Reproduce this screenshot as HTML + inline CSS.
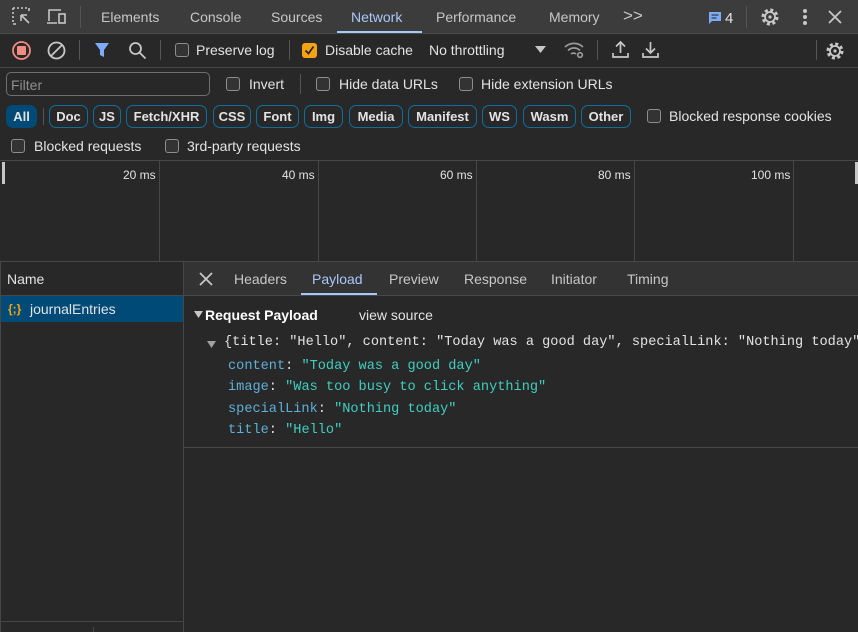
<!DOCTYPE html>
<html><head><style>
*{box-sizing:border-box;margin:0;padding:0}
body{width:858px;height:632px;background:#282828;font-family:"Liberation Sans",sans-serif;font-size:14px;color:#e3e3e3;position:relative;overflow:hidden}
.a{position:absolute;white-space:nowrap}
.hl{position:absolute;height:1px;background:#474747}
.vl{position:absolute;width:1px;background:#474747}
.cb{position:absolute;width:14px;height:14px;border:1.5px solid #8e8e8e;border-radius:3px;background:#333}
.chip{position:absolute;top:105px;height:23px;border:1px solid #0e6e9e;border-radius:7px;font-weight:bold;font-size:13px;color:#e3e3e3;padding-top:3px;text-align:center}
.mono{font-family:"Liberation Mono",monospace;font-size:13.6px}
.k{color:#5db0d7}.s{color:#3fcfc0}
</style></head><body>
<div class="a" style="left:0;top:0;width:858px;height:33px;background:#3c3c3c"></div>
<div class="hl" style="left:0;top:33px;width:858px;background:#4a4a4a"></div>
<svg class="a" style="left:12px;top:7px" width="22" height="20" viewBox="0 0 22 20" fill="none" stroke="#c7c7c7" stroke-width="1.6"><path d="M1 1h2M5 1h2M9 1h2M13 1h2M1 1v2M1 5v2M1 9v2M1 13v2M1 17h3M17 1v3" /><path d="M9 8l8 8M9 8h6M9 8v6"/></svg>
<svg class="a" style="left:46px;top:8px" width="22" height="18" viewBox="0 0 22 18" fill="none" stroke="#c7c7c7" stroke-width="1.6"><path d="M3 13V2h12M1 15h10"/><rect x="13" y="6" width="6" height="9"/></svg>
<div class="vl" style="left:80px;top:6px;height:22px;background:#555"></div>
<div class="a" style="left:101px;top:9px;color:#c7c7c7">Elements</div>
<div class="a" style="left:190px;top:9px;color:#c7c7c7">Console</div>
<div class="a" style="left:271px;top:9px;color:#c7c7c7">Sources</div>
<div class="a" style="left:351px;top:9px;color:#a8c7fa">Network</div>
<div class="a" style="left:337px;top:31px;width:85px;height:2px;background:#a8c7fa"></div>
<div class="a" style="left:436px;top:9px;color:#c7c7c7">Performance</div>
<div class="a" style="left:549px;top:9px;color:#c7c7c7">Memory</div>
<div class="a" style="left:623px;top:6px;color:#c7c7c7;font-size:17px">&gt;&gt;</div>
<svg class="a" style="left:708px;top:11px" width="14" height="13" viewBox="0 0 14 13"><path d="M1 1h12v9H4l-3 3z" fill="#7cacf8"/><path d="M3.5 4h7M3.5 7h5" stroke="#3c3c3c" stroke-width="1.3"/></svg>
<div class="a" style="left:725px;top:10px;color:#e3e3e3;font-size:15px">4</div>
<div class="vl" style="left:746px;top:6px;height:22px;background:#555"></div>
<svg class="a" style="left:760px;top:7px" width="20" height="20" viewBox="0 0 20 20"><circle cx="10" cy="10" r="7" fill="none" stroke="#c7c7c7" stroke-width="3" stroke-dasharray="3 2.5"/><circle cx="10" cy="10" r="5" fill="none" stroke="#c7c7c7" stroke-width="1.8"/><circle cx="10" cy="10" r="1.6" fill="#c7c7c7"/></svg>
<div class="a" style="left:803px;top:9px;width:4px;height:4px;border-radius:2px;background:#c7c7c7;box-shadow:0 6px #c7c7c7,0 12px #c7c7c7"></div>
<svg class="a" style="left:828px;top:10px" width="14" height="14"><path d="M1 1l12 12M13 1L1 13" stroke="#c7c7c7" stroke-width="1.8"/></svg>

<svg class="a" style="left:11px;top:40px" width="21" height="21"><circle cx="10.5" cy="10.5" r="8.5" fill="none" stroke="#f28b82" stroke-width="1.8"/><rect x="6" y="6" width="9" height="9" rx="1" fill="#f28b82"/></svg>
<svg class="a" style="left:46px;top:40px" width="21" height="21"><circle cx="10.5" cy="10.5" r="8" fill="none" stroke="#c7c7c7" stroke-width="1.8"/><path d="M5 16L16 5" stroke="#c7c7c7" stroke-width="1.8"/></svg>
<div class="vl" style="left:79px;top:40px;height:20px;background:#555"></div>
<svg class="a" style="left:94px;top:42px" width="16" height="16"><path d="M1 1h14l-5 7v7l-4-2V8z" fill="#7cacf8"/></svg>
<svg class="a" style="left:128px;top:41px" width="19" height="19" fill="none" stroke="#c7c7c7" stroke-width="1.8"><circle cx="7.5" cy="7.5" r="5.5"/><path d="M11.5 11.5l6 6"/></svg>
<div class="vl" style="left:160px;top:40px;height:20px;background:#555"></div>
<div class="cb" style="left:175px;top:43px"></div>
<div class="a" style="left:196px;top:42px">Preserve log</div>
<div class="vl" style="left:289px;top:40px;height:20px;background:#555"></div>
<div class="a" style="left:302px;top:43px;width:15px;height:15px;background:#f6a313;border-radius:3px"></div>
<svg class="a" style="left:304px;top:45px" width="11" height="11"><path d="M1.5 5.5l3 3 5-7" fill="none" stroke="#282828" stroke-width="1.8"/></svg>
<div class="a" style="left:325px;top:42px">Disable cache</div>
<div class="a" style="left:429px;top:42px">No throttling</div>
<svg class="a" style="left:535px;top:46px" width="11" height="7"><path d="M0 0h11L5.5 7z" fill="#c7c7c7"/></svg>
<svg class="a" style="left:564px;top:40px" width="21" height="19" fill="none" stroke="#9a9a9a" stroke-width="1.7"><path d="M1 7a13 13 0 0 1 18 0M4 10.5a8.5 8.5 0 0 1 12 0M7 14a4 4 0 0 1 5 0"/><circle cx="16" cy="15" r="2.3"/></svg>
<div class="vl" style="left:597px;top:40px;height:20px;background:#555"></div>
<svg class="a" style="left:612px;top:40px" width="17" height="19" fill="none" stroke="#c7c7c7" stroke-width="1.7"><path d="M8.5 13V2M4 6.5l4.5-4.5 4.5 4.5M1 13v4h15v-4"/></svg>
<svg class="a" style="left:642px;top:40px" width="17" height="19" fill="none" stroke="#c7c7c7" stroke-width="1.7"><path d="M8.5 2v11M4 8.5l4.5 4.5 4.5-4.5M1 13v4h15v-4"/></svg>
<div class="vl" style="left:816px;top:40px;height:20px;background:#555"></div>
<svg class="a" style="left:825px;top:41px" width="20" height="20" viewBox="0 0 20 20"><circle cx="10" cy="10" r="7" fill="none" stroke="#c7c7c7" stroke-width="3" stroke-dasharray="3 2.5"/><circle cx="10" cy="10" r="5" fill="none" stroke="#c7c7c7" stroke-width="1.8"/><circle cx="10" cy="10" r="1.6" fill="#c7c7c7"/></svg>
<div class="hl" style="left:0;top:67px;width:858px"></div>

<div class="a" style="left:6px;top:72px;width:204px;height:24px;border:1px solid #6f6f6f;border-radius:5px"></div>
<div class="a" style="left:11px;top:77px;color:#8e8e8e">Filter</div>
<div class="cb" style="left:226px;top:77px"></div><div class="a" style="left:249px;top:76px">Invert</div>
<div class="vl" style="left:300px;top:74px;height:20px;background:#555"></div>
<div class="cb" style="left:316px;top:77px"></div><div class="a" style="left:339px;top:76px">Hide data URLs</div>
<div class="cb" style="left:459px;top:77px"></div><div class="a" style="left:481px;top:76px">Hide extension URLs</div>

<div class="chip" style="left:6px;width:31px;background:#004a77;border-color:#004a77">All</div>
<div class="vl" style="left:43px;top:108px;height:17px;background:#555"></div>
<div class="chip" style="left:49px;width:39px">Doc</div>
<div class="chip" style="left:93px;width:28px">JS</div>
<div class="chip" style="left:126px;width:81px">Fetch/XHR</div>
<div class="chip" style="left:213px;width:38px">CSS</div>
<div class="chip" style="left:256px;width:43px">Font</div>
<div class="chip" style="left:304px;width:39px">Img</div>
<div class="chip" style="left:349px;width:54px">Media</div>
<div class="chip" style="left:408px;width:69px">Manifest</div>
<div class="chip" style="left:482px;width:35px">WS</div>
<div class="chip" style="left:523px;width:53px">Wasm</div>
<div class="chip" style="left:581px;width:50px">Other</div>
<div class="cb" style="left:647px;top:109px"></div><div class="a" style="left:669px;top:108px">Blocked response cookies</div>
<div class="cb" style="left:11px;top:139px"></div><div class="a" style="left:34px;top:138px">Blocked requests</div>
<div class="cb" style="left:165px;top:139px"></div><div class="a" style="left:187px;top:138px">3rd-party requests</div>
<div class="hl" style="left:0;top:160px;width:858px"></div>

<div class="a" style="left:2px;top:162px;width:3px;height:22px;background:#c7c7c7"></div>
<div class="a" style="left:855px;top:162px;width:3px;height:22px;background:#c7c7c7"></div>
<div class="vl" style="left:159px;top:161px;height:100px"></div>
<div class="vl" style="left:318px;top:161px;height:100px"></div>
<div class="vl" style="left:476px;top:161px;height:100px"></div>
<div class="vl" style="left:634px;top:161px;height:100px"></div>
<div class="vl" style="left:793px;top:161px;height:100px"></div>
<div class="a" style="left:123px;top:168px;font-size:12px">20 ms</div>
<div class="a" style="left:282px;top:168px;font-size:12px">40 ms</div>
<div class="a" style="left:440px;top:168px;font-size:12px">60 ms</div>
<div class="a" style="left:598px;top:168px;font-size:12px">80 ms</div>
<div class="a" style="left:751px;top:168px;font-size:12px">100 ms</div>
<div class="hl" style="left:0;top:261px;width:858px"></div>

<div class="vl" style="left:0;top:262px;height:370px"></div>
<div class="vl" style="left:183px;top:262px;height:370px"></div>
<div class="a" style="left:7px;top:271px">Name</div>
<div class="hl" style="left:0;top:295px;width:184px"></div>
<div class="a" style="left:1px;top:296px;width:182px;height:26px;background:#004a77"></div>
<div class="a" style="left:8px;top:302px;color:#f6a313;font-size:12px;font-weight:bold">{;}</div>
<div class="a" style="left:30px;top:301px">journalEntries</div>
<div class="hl" style="left:0;top:621px;width:184px"></div>
<div class="vl" style="left:93px;top:627px;height:5px"></div>

<div class="a" style="left:184px;top:262px;width:674px;height:33px;background:#333"></div>
<div class="hl" style="left:184px;top:295px;width:674px"></div>
<svg class="a" style="left:199px;top:272px" width="14" height="14"><path d="M1 1l12 12M13 1L1 13" stroke="#c7c7c7" stroke-width="1.8"/></svg>
<div class="a" style="left:234px;top:271px;color:#c7c7c7">Headers</div>
<div class="a" style="left:312px;top:271px;color:#a8c7fa">Payload</div>
<div class="a" style="left:301px;top:293px;width:76px;height:2px;background:#a8c7fa"></div>
<div class="a" style="left:389px;top:271px;color:#c7c7c7">Preview</div>
<div class="a" style="left:464px;top:271px;color:#c7c7c7">Response</div>
<div class="a" style="left:551px;top:271px;color:#c7c7c7">Initiator</div>
<div class="a" style="left:627px;top:271px;color:#c7c7c7">Timing</div>
<svg class="a" style="left:194px;top:311px" width="9" height="7"><path d="M0 0h9L4.5 7z" fill="#c7c7c7"/></svg>
<div class="a" style="left:205px;top:307px;font-weight:bold;color:#fff">Request Payload</div>
<div class="a" style="left:359px;top:307px">view source</div>
<svg class="a" style="left:207px;top:341px" width="9" height="7"><path d="M0 0h9L4.5 7z" fill="#a0a0a0"/></svg>
<div class="a mono" style="left:224px;top:335px;color:#e3e3e3">{title: "Hello", content: "Today was a good day", specialLink: "Nothing today"</div>
<div class="a mono" style="left:228px;top:359px"><span class="k">content</span>: <span class="s">"Today was a good day"</span></div>
<div class="a mono" style="left:228px;top:380px"><span class="k">image</span>: <span class="s">"Was too busy to click anything"</span></div>
<div class="a mono" style="left:228px;top:402px"><span class="k">specialLink</span>: <span class="s">"Nothing today"</span></div>
<div class="a mono" style="left:228px;top:423px"><span class="k">title</span>: <span class="s">"Hello"</span></div>
<div class="hl" style="left:184px;top:447px;width:674px"></div>
</body></html>
